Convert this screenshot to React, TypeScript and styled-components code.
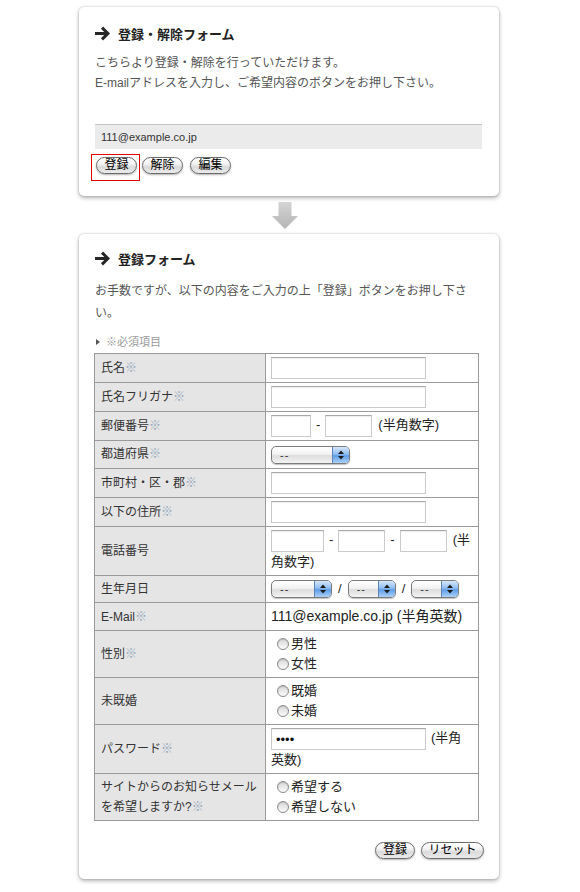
import styled, { createGlobalStyle } from "styled-components";

const GlobalStyle = createGlobalStyle`
  body {
    margin: 0;
    background: #fff;
    font-family: "Liberation Sans", "Noto Sans CJK JP", sans-serif;
    color: #333;
  }
`;

const Page = styled.div`
  display: flex;
  flex-direction: column;
  width: 420px;
  padding: 7px 0 12px 79px;
`;

const Card = styled.section<{ $pad: string }>`
  background: #fff;
  border-radius: 5px;
  box-shadow: 0 0 2px rgba(0, 0, 0, 0.22), 0 2px 4px rgba(0, 0, 0, 0.3);
  padding: ${(p) => p.$pad};
`;

const Heading = styled.h2`
  margin: 0;
  height: 20px;
  display: flex;
  align-items: center;
  gap: 8px;
  font-size: 13px;
  font-weight: bold;
  color: #222;
`;

const Intro = styled.p<{ $leading: number; $gap: number }>`
  margin: ${(p) => p.$gap}px 0 0;
  font-size: 12px;
  line-height: ${(p) => p.$leading}px;
  color: #555;
`;

const MailBox = styled.input`
  display: block;
  box-sizing: border-box;
  width: 100%;
  height: 25px;
  margin: 31px 0 0;
  padding: 0 6px;
  border: 0;
  border-top: 1px solid #c4c4c4;
  background: #ebebeb;
  font: 11px "Liberation Sans", sans-serif;
  color: #333;
  outline: none;
`;

const ButtonRow = styled.div`
  display: flex;
  align-items: flex-start;
  gap: 7px;
  margin-top: 5px;

  > button {
    margin-top: 3px;
  }
`;

const Highlight = styled.span`
  display: flex;
  border: 1px solid #e00000;
  padding: 2px 2px 6px 4px;
  margin: 0 -5px 0 -4px;
`;

const AquaButton = styled.button<{ $w: number }>`
  box-sizing: border-box;
  width: ${(p) => p.$w}px;
  height: 17px;
  margin: 0;
  padding: 0;
  border: 1px solid #6a6a6a;
  border-radius: 9px;
  background: linear-gradient(#ffffff 0%, #f3f3f3 40%, #dadada 60%, #ebebeb 100%);
  box-shadow: 0 1px 2px rgba(0, 0, 0, 0.3);
  font-family: "Liberation Sans", "Noto Sans CJK JP", sans-serif;
  font-size: 12px;
  line-height: 15px;
  color: #000;
  cursor: pointer;
`;

const ArrowDivider = styled.div`
  height: 38px;
  display: flex;
  justify-content: center;
  align-items: flex-start;
  padding: 6px 8px 0 0;
  box-sizing: border-box;
`;

const Required = styled.p`
  margin: 10px 0 0;
  padding-left: 1px;
  display: flex;
  align-items: center;
  gap: 6px;
  font-size: 11px;
  line-height: 16px;
  color: #999;
`;

const FormTable = styled.table`
  width: 385px;
  margin: 3px 0 0 -1px;
  border-collapse: collapse;
  table-layout: fixed;
`;

const LabelCol = styled.col`
  width: 171px;
`;

const LabelCell = styled.th`
  padding: 3px 6px 3px 6px;
  border: 1px solid #9a9a9a;
  background: #e5e5e5;
  font-size: 12px;
  font-weight: normal;
  line-height: 20px;
  text-align: left;
  vertical-align: middle;
  color: #333;
`;

const Mark = styled.span`
  color: #93a5ba;
`;

const ValueCell = styled.td`
  padding: 3px 6px 3px 5px;
  border: 1px solid #9a9a9a;
  background: #fff;
  font-size: 13px;
  line-height: 20px;
  vertical-align: middle;
  color: #222;
`;

const TextInput = styled.input<{ $w: number }>`
  box-sizing: border-box;
  width: ${(p) => p.$w}px;
  height: 22px;
  margin: 0;
  padding: 0 4px;
  vertical-align: top;
  border: 1px solid #cacaca;
  border-top-color: #a8a8a8;
  box-shadow: inset 0 1px 1px rgba(0, 0, 0, 0.07);
  font: 13px "Liberation Sans", sans-serif;
  color: #111;
  outline: none;
`;

const Sep = styled.span<{ $space: number }>`
  padding: 0 ${(p) => p.$space}px;
`;

const Note = styled.span<{ $gap: number }>`
  margin-left: ${(p) => p.$gap}px;
`;

const SelectBox = styled.span<{ $w: number }>`
  display: inline-flex;
  vertical-align: middle;
  box-sizing: border-box;
  width: ${(p) => p.$w}px;
  height: 18px;
  margin: 1px 0;
  border: 1px solid #7b7b7b;
  border-radius: 5px;
  overflow: hidden;
  background: linear-gradient(#ffffff, #f2f2f2 45%, #dddddd 55%, #f3f3f3);
  box-shadow: 0 1px 1px rgba(0, 0, 0, 0.25);
`;

const NativeSelect = styled.select`
  appearance: none;
  flex: 1;
  min-width: 0;
  margin: 0;
  border: 0;
  padding: 0 0 0 8px;
  background: transparent;
  font: 11px "Liberation Sans", sans-serif;
  letter-spacing: 1px;
  color: #333;
  outline: none;
`;

const Stepper = styled.span`
  width: 16px;
  display: flex;
  align-items: center;
  justify-content: center;
  border-left: 1px solid #5d84b6;
  background: linear-gradient(#d6e7fb, #8fbcef 45%, #5f9de6 55%, #abd1f7);
`;

const EmailText = styled.span`
  font-size: 14px;
`;

const RadioLine = styled.label`
  display: block;
  line-height: 20px;
`;

const Radio = styled.input.attrs({ type: "radio" })`
  appearance: none;
  box-sizing: border-box;
  width: 12px;
  height: 12px;
  margin: 0 2px 0 6px;
  border: 1px solid #8c8c8c;
  border-radius: 50%;
  background: linear-gradient(#d8d8d8, #fbfbfb);
  box-shadow: inset 0 1px 1px rgba(0, 0, 0, 0.15);
  vertical-align: -2px;
`;

const Footer = styled.div`
  display: flex;
  justify-content: flex-end;
  gap: 6px;
  margin: 21px -2px 0 0;
`;

function RightArrow() {
  return (
    <svg width="15" height="15" viewBox="0 0 15 15">
      <path d="M0 7.5h12.4M7 1.6l5.9 5.9L7 13.4" fill="none" stroke="#262626" strokeWidth="3" />
    </svg>
  );
}

function DownArrow() {
  return (
    <svg width="26" height="27" viewBox="0 0 26 27">
      <defs>
        <linearGradient id="down" x1="0" y1="0" x2="0" y2="1">
          <stop offset="0" stopColor="#d4d4d4" />
          <stop offset="1" stopColor="#b4b4b4" />
        </linearGradient>
      </defs>
      <path d="M6.5 0h13v14H26L13 27 0 14h6.5z" fill="url(#down)" />
    </svg>
  );
}

function Bullet() {
  return (
    <svg width="4" height="6" viewBox="0 0 4 6">
      <path d="M0 0l4 3-4 3z" fill="#555" />
    </svg>
  );
}

function Aqua(props: { w: number }) {
  return (
    <SelectBox $w={props.w}>
      <NativeSelect defaultValue="">
        <option value="">--</option>
      </NativeSelect>
      <Stepper>
        <svg width="6" height="10" viewBox="0 0 6 10">
          <path d="M0 4L3 0.5 6 4zM0 6l3 3.5L6 6z" fill="#1c1c1c" />
        </svg>
      </Stepper>
    </SelectBox>
  );
}

function Label(props: { text: string; required?: boolean }) {
  return (
    <LabelCell>
      {props.text}
      {props.required && <Mark>※</Mark>}
    </LabelCell>
  );
}

export default function App() {
  return (
    <>
      <GlobalStyle />
      <Page>
        <Card $pad="16px 17px 15px 16px">
          <Heading>
            <RightArrow />
            登録・解除フォーム
          </Heading>
          <Intro $leading={19.5} $gap={11}>
            こちらより登録・解除を行っていただけます。
            <br />
            E-mailアドレスを入力し、ご希望内容のボタンをお押し下さい。
          </Intro>
          <MailBox readOnly defaultValue="111@example.co.jp" />
          <ButtonRow>
            <Highlight>
              <AquaButton $w={41}>登録</AquaButton>
            </Highlight>
            <AquaButton $w={41}>解除</AquaButton>
            <AquaButton $w={41}>編集</AquaButton>
          </ButtonRow>
        </Card>

        <ArrowDivider>
          <DownArrow />
        </ArrowDivider>

        <Card $pad="14px 17px 20px 16px">
          <Heading>
            <RightArrow />
            登録フォーム
          </Heading>
          <Intro $leading={21.5} $gap={13}>
            お手数ですが、以下の内容をご入力の上「登録」ボタンをお押し下さい。
          </Intro>
          <Required>
            <Bullet />
            ※必須項目
          </Required>
          <FormTable>
            <colgroup>
              <LabelCol />
              <col />
            </colgroup>
            <tbody>
              <tr>
                <Label text="氏名" required />
                <ValueCell>
                  <TextInput $w={155} />
                </ValueCell>
              </tr>
              <tr>
                <Label text="氏名フリガナ" required />
                <ValueCell>
                  <TextInput $w={155} />
                </ValueCell>
              </tr>
              <tr>
                <Label text="郵便番号" required />
                <ValueCell>
                  <TextInput $w={40} />
                  <Sep $space={5}>-</Sep>
                  <TextInput $w={47} />
                  <Note $gap={6}>(半角数字)</Note>
                </ValueCell>
              </tr>
              <tr>
                <Label text="都道府県" required />
                <ValueCell>
                  <Aqua w={79} />
                </ValueCell>
              </tr>
              <tr>
                <Label text="市町村・区・郡" required />
                <ValueCell>
                  <TextInput $w={155} />
                </ValueCell>
              </tr>
              <tr>
                <Label text="以下の住所" required />
                <ValueCell>
                  <TextInput $w={155} />
                </ValueCell>
              </tr>
              <tr>
                <Label text="電話番号" />
                <ValueCell>
                  <TextInput $w={53} />
                  <Sep $space={5}>-</Sep>
                  <TextInput $w={47} />
                  <Sep $space={5}>-</Sep>
                  <TextInput $w={47} />
                  <Note $gap={6}>(半角数字)</Note>
                </ValueCell>
              </tr>
              <tr>
                <Label text="生年月日" />
                <ValueCell>
                  <Aqua w={61} />
                  <Sep $space={6}>/</Sep>
                  <Aqua w={48} />
                  <Sep $space={6}>/</Sep>
                  <Aqua w={48} />
                </ValueCell>
              </tr>
              <tr>
                <Label text="E-Mail" required />
                <ValueCell>
                  <EmailText>111@example.co.jp (半角英数)</EmailText>
                </ValueCell>
              </tr>
              <tr>
                <Label text="性別" required />
                <ValueCell>
                  <RadioLine>
                    <Radio name="sex" />
                    男性
                  </RadioLine>
                  <RadioLine>
                    <Radio name="sex" />
                    女性
                  </RadioLine>
                </ValueCell>
              </tr>
              <tr>
                <Label text="未既婚" />
                <ValueCell>
                  <RadioLine>
                    <Radio name="married" />
                    既婚
                  </RadioLine>
                  <RadioLine>
                    <Radio name="married" />
                    未婚
                  </RadioLine>
                </ValueCell>
              </tr>
              <tr>
                <Label text="パスワード" required />
                <ValueCell>
                  <TextInput $w={155} type="password" defaultValue="abcd" />
                  <Note $gap={5}>(半角英数)</Note>
                </ValueCell>
              </tr>
              <tr>
                <Label text="サイトからのお知らせメールを希望しますか?" required />
                <ValueCell>
                  <RadioLine>
                    <Radio name="news" />
                    希望する
                  </RadioLine>
                  <RadioLine>
                    <Radio name="news" />
                    希望しない
                  </RadioLine>
                </ValueCell>
              </tr>
            </tbody>
          </FormTable>
          <Footer>
            <AquaButton $w={40}>登録</AquaButton>
            <AquaButton $w={63}>リセット</AquaButton>
          </Footer>
        </Card>
      </Page>
    </>
  );
}
